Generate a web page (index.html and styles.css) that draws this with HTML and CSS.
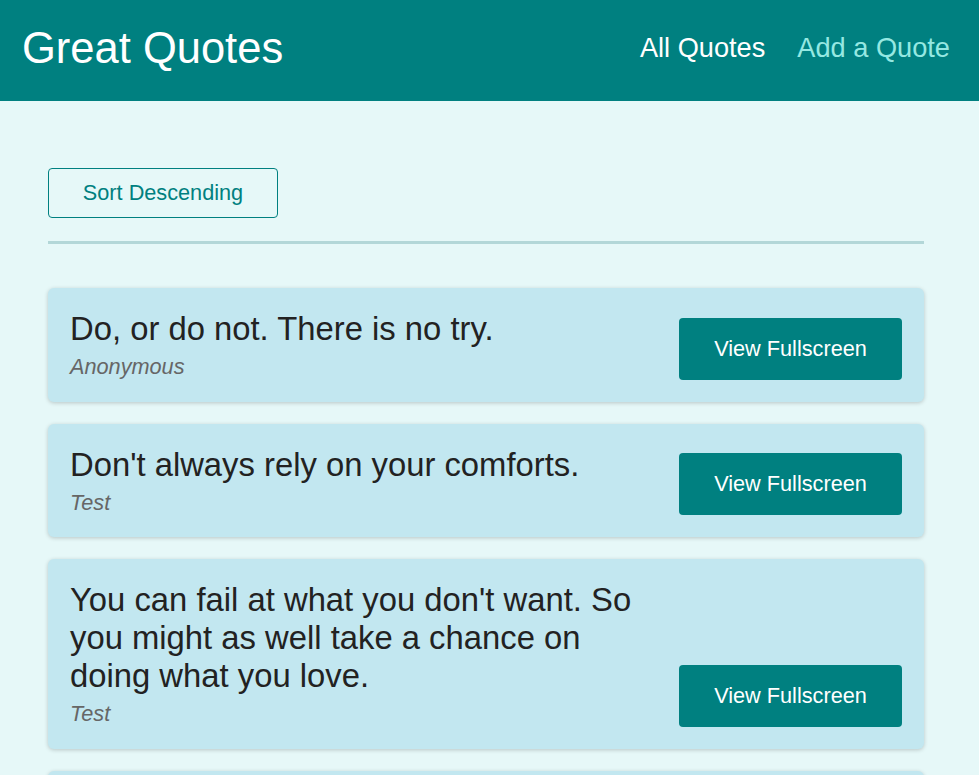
FILE: index.html
```html
<!DOCTYPE html>
<html lang="en">
<head>
<meta charset="utf-8">
<title>Great Quotes</title>
<link rel="stylesheet" href="styles.css">
</head>
<body>
<header class="header">
  <div class="logo">Great Quotes</div>
  <nav class="nav">
    <a class="nav-link" href="#">All Quotes</a>
    <a class="nav-link active" href="#">Add a Quote</a>
  </nav>
</header>
<main class="main">
  <div class="sorting">
    <button class="sort-btn">Sort Descending</button>
  </div>
  <ul class="list">
    <li class="item">
      <figure class="fig">
        <blockquote class="quote">Do, or do not. There is no try.</blockquote>
        <figcaption class="author">Anonymous</figcaption>
      </figure>
      <a class="btn" href="#">View Fullscreen</a>
    </li>
    <li class="item">
      <figure class="fig">
        <blockquote class="quote">Don't always rely on your comforts.</blockquote>
        <figcaption class="author">Test</figcaption>
      </figure>
      <a class="btn" href="#">View Fullscreen</a>
    </li>
    <li class="item">
      <figure class="fig">
        <blockquote class="quote">You can fail at what you don't want. So you might as well take a chance on doing what you love.</blockquote>
        <figcaption class="author">Test</figcaption>
      </figure>
      <a class="btn" href="#">View Fullscreen</a>
    </li>
    <li class="item">
      <figure class="fig">
        <blockquote class="quote">Everything you've ever wanted is on the other side of fear.</blockquote>
        <figcaption class="author">Test</figcaption>
      </figure>
      <a class="btn" href="#">View Fullscreen</a>
    </li>
  </ul>
</main>
</body>
</html>
```

FILE: styles.css
```css
* { box-sizing: border-box; }
html, body { margin: 0; padding: 0; }
body {
  background: #e6f8f8;
  font-family: "Liberation Sans", Arial, sans-serif;
  color: #222;
}
.header {
  height: 101px;
  background: #008080;
  display: flex;
  align-items: center;
  justify-content: space-between;
  padding: 0 29px 5px 22px;
}
.logo {
  color: #fff;
  font-size: 43.5px;
}
.nav {
  display: flex;
  gap: 32px;
}
.nav-link {
  color: #fff;
  text-decoration: none;
  font-size: 27.2px;
}
.nav-link.active { color: #95e8e2; }
.main {
  width: 876px;
  margin-left: 48px;
  padding-top: 67px;
}
.sorting {
  padding-bottom: 23px;
  border-bottom: 3px solid #b3d7d8;
}
.sort-btn {
  font: inherit;
  font-size: 21.7px;
  color: #008080;
  background: transparent;
  border: 1px solid #008080;
  border-radius: 4px;
  width: 230px;
  height: 50px;
  padding: 0;
  cursor: pointer;
}
.list {
  list-style: none;
  margin: 44px 0 0;
  padding: 0;
  display: flex;
  flex-direction: column;
  gap: 22px;
}
.item {
  background: #c2e7f0;
  border-radius: 6px;
  box-shadow: 0 1px 4px rgba(0,0,0,0.2);
  padding: 22px;
  display: flex;
  justify-content: space-between;
  align-items: flex-end;
  gap: 40px;
}
.fig {
  margin: 0;
  flex: 1;
  padding-bottom: 0.5px;
}
.quote {
  margin: 0;
  font-size: 32.8px;
  line-height: 38px;
  color: #222;
}
.author {
  margin-top: 7px;
  font-size: 21.7px;
  line-height: 24px;
  font-style: italic;
  color: #666;
}
.btn {
  flex: none;
  width: 223px;
  height: 62px;
  display: flex;
  align-items: center;
  justify-content: center;
  background: #008080;
  color: #fff;
  text-decoration: none;
  border-radius: 4px;
  font-size: 21.7px;
}
```
